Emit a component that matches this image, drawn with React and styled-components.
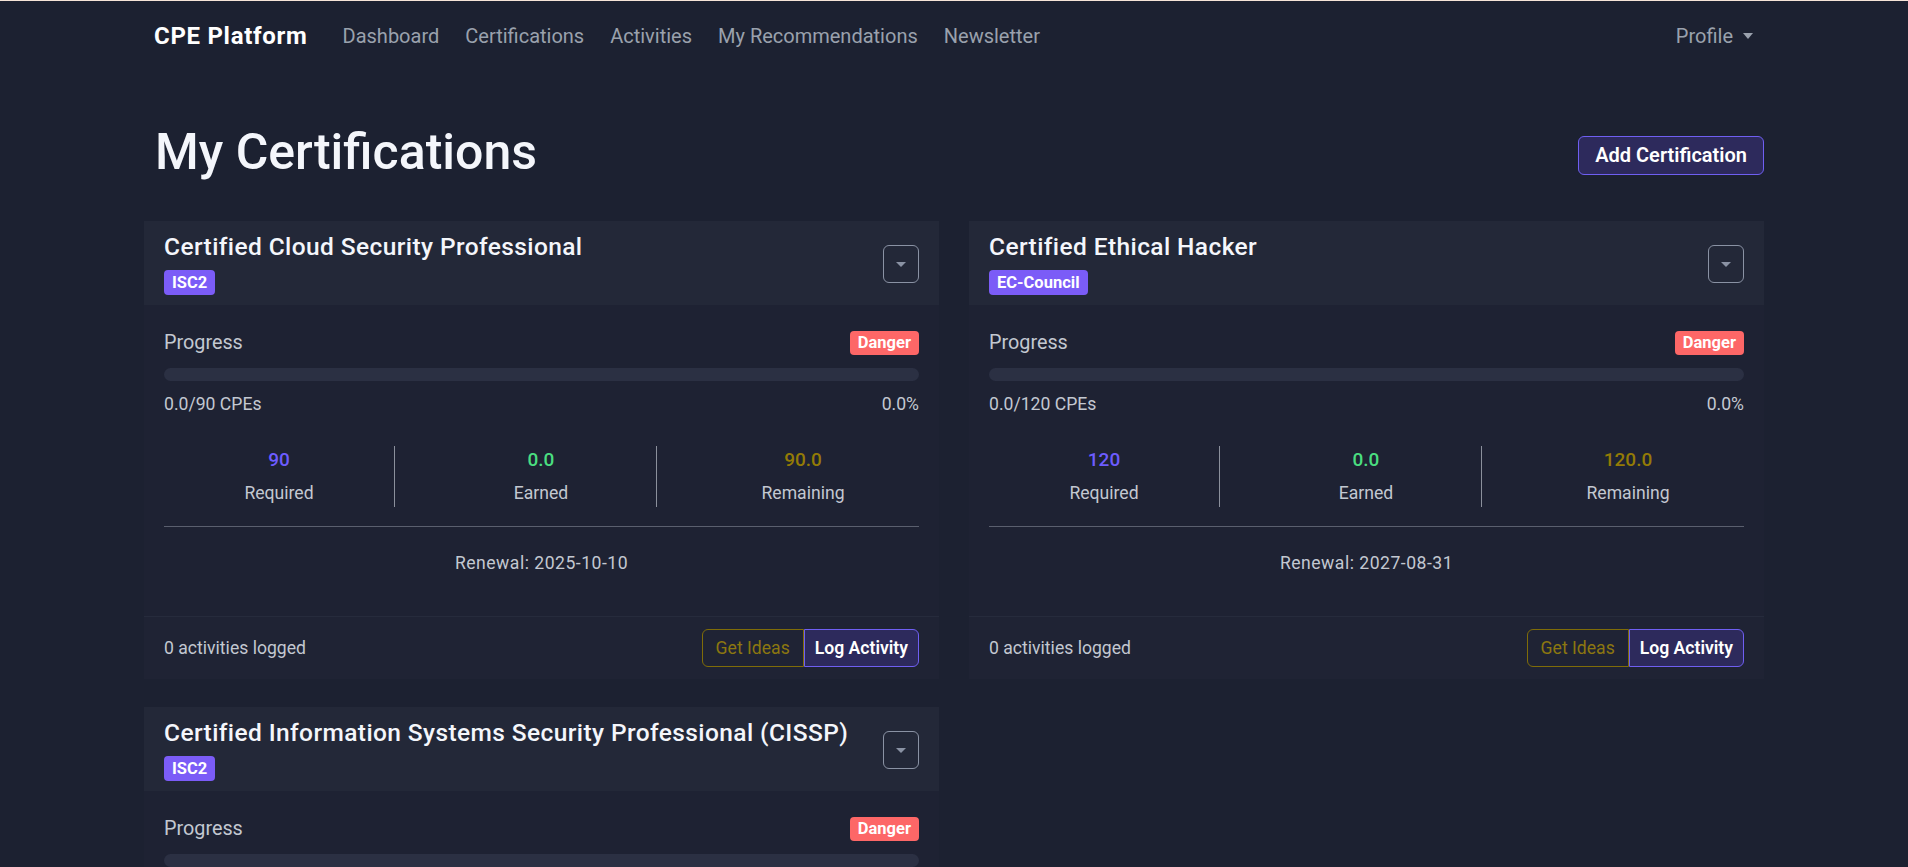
import React from 'react';
import styled, { createGlobalStyle } from 'styled-components';

const GlobalStyle = createGlobalStyle`
  * { box-sizing: border-box; }
  html, body { margin: 0; padding: 0; background: #1c2131; }
  body {
    font-family: Roboto, "Liberation Sans", sans-serif;
    color: #c3c8d1;
    border-top: 1px solid #f6e4d8;
  }
`;

const NavBar = styled.nav`
  height: 70px;
`;

const NavInner = styled.div`
  width: 1620px;
  height: 100%;
  margin: 0 auto;
  padding: 0 11px 0 10px;
  display: flex;
  align-items: center;
`;

const Brand = styled.a`
  font-size: 24px;
  font-weight: 700;
  letter-spacing: 0.7px;
  color: #ffffff;
  text-decoration: none;
  margin-right: 22px;
`;

const NavLink = styled.a`
  font-size: 20px;
  color: #9aa1ad;
  padding: 0 13px;
  text-decoration: none;
`;

const Profile = styled.a`
  margin-left: auto;
  display: flex;
  align-items: center;
  gap: 10px;
  font-size: 20px;
  color: #9aa1ad;
  text-decoration: none;
`;

const Caret = styled.span`
  width: 0;
  height: 0;
  border-left: ${p => p.$w / 2}px solid transparent;
  border-right: ${p => p.$w / 2}px solid transparent;
  border-top: ${p => p.$h}px solid ${p => p.$color};
`;

const Main = styled.main`
  width: 1620px;
  margin: 0 auto;
`;

const HeadRow = styled.div`
  display: flex;
  align-items: center;
  justify-content: space-between;
  padding: 51px 0 39px 11px;
`;

const PageTitle = styled.h1`
  margin: 0;
  font-size: 50px;
  font-weight: 500;
  line-height: 60px;
  color: #f4f6fb;
`;

const AddButton = styled.button`
  height: 39px;
  padding: 0 16px;
  font-family: inherit;
  font-size: 20px;
  font-weight: 600;
  color: #ffffff;
  background: #2d2a5c;
  border: 1px solid #6f5ff2;
  border-radius: 6px;
  margin-top: 6px;
`;

const CardGrid = styled.div`
  display: grid;
  grid-template-columns: 1fr 1fr;
  column-gap: 30px;
  row-gap: 28px;
  align-items: start;
`;

const Card = styled.section`
  background: #1e2233;
`;

const CardHeader = styled.div`
  height: 84px;
  display: flex;
  align-items: center;
  justify-content: space-between;
  padding: 2px 20px 0;
  background: #232838;
`;

const CardTitle = styled.h2`
  margin: 0 0 9px;
  font-size: 24.5px;
  font-weight: 500;
  letter-spacing: 0.4px;
  line-height: 28px;
  color: #f4f6fb;
`;

const Badge = styled.span`
  display: inline-block;
  height: ${p => p.$h || 25}px;
  line-height: ${p => p.$h || 25}px;
  padding: 0 8px;
  border-radius: 4px;
  font-size: 16.5px;
  font-weight: 700;
  color: #ffffff;
  background: ${p => p.$bg};
`;

const Toggle = styled.button`
  width: 36px;
  height: 38px;
  display: flex;
  align-items: center;
  justify-content: center;
  background: transparent;
  border: 1px solid #8a92a4;
  border-radius: 6px;
  padding: 0;
`;

const CardBody = styled.div`
  padding: 26px 20px 24px;
`;

const Between = styled.div`
  display: flex;
  align-items: center;
  justify-content: space-between;
`;

const BodyText = styled.span`
  font-size: 17.6px;
  line-height: 26px;
  color: #c3c8d1;
`;

const SectionLabel = styled.span`
  font-size: 19.8px;
  line-height: 24px;
  color: #c3c8d1;
`;

const Track = styled.div`
  margin-top: 13px;
  height: 13px;
  border-radius: 7px;
  background: #2b3043;
  overflow: hidden;
`;

const Fill = styled.div`
  height: 100%;
  background: #6f5ff2;
`;

const CountRow = styled(Between)`
  margin-top: 10px;
`;

const StatGrid = styled.div`
  display: grid;
  grid-template-columns: repeat(3, 1fr);
  margin: 29px -15px 0 -16px;
`;

const Stat = styled.div`
  position: relative;
  text-align: center;
  padding: 1px 0;
  &:not(:last-child)::after {
    content: '';
    position: absolute;
    right: 15px;
    top: 0;
    bottom: 0;
    width: 1px;
    background: #8b909c;
  }
`;

const StatValue = styled.div`
  font-size: 19px;
  font-weight: 500;
  line-height: 26px;
  color: ${p => p.$color};
`;

const StatLabel = styled.div`
  margin-top: 7px;
  font-size: 17.6px;
  line-height: 26px;
  color: #c3c8d1;
`;

const Rule = styled.hr`
  margin: 19px 0 0;
  border: 0;
  border-top: 1px solid #5a5f6e;
`;

const Renewal = styled.div`
  margin: 23px 0 16px;
  text-align: center;
  font-size: 17.6px;
  letter-spacing: 0.5px;
  line-height: 26px;
  color: #c3c8d1;
`;

const CardFooter = styled(Between)`
  height: 63px;
  padding: 0 20px;
  background: #1f2334;
  border-top: 1px solid #262b3c;
`;

const BtnGroup = styled.div`
  display: flex;
`;

const GroupButton = styled.button`
  height: 38px;
  padding: 0 ${p => p.$px}px;
  font-family: inherit;
  font-size: 17.6px;
  font-weight: ${p => (p.$primary ? 600 : 400)};
  color: ${p => (p.$primary ? '#ffffff' : '#8c7710')};
  background: ${p => (p.$primary ? '#2d2a5c' : 'transparent')};
  border: 1px solid ${p => (p.$primary ? '#6f5ff2' : '#7f6c08')};
  border-radius: ${p => (p.$primary ? '0 6px 6px 0' : '6px 0 0 6px')};
`;

const certs = [
  {
    title: 'Certified Cloud Security Professional',
    org: 'ISC2',
    required: 90,
    renewal: '2025-10-10',
  },
  {
    title: 'Certified Ethical Hacker',
    org: 'EC-Council',
    required: 120,
    renewal: '2027-08-31',
  },
  {
    title: 'Certified Information Systems Security Professional (CISSP)',
    org: 'ISC2',
    required: 120,
    renewal: '2026-05-31',
  },
];

function CertCard({ cert }) {
  const earned = 0;
  const pct = (earned / cert.required) * 100;
  return (
    <Card>
      <CardHeader>
        <div>
          <CardTitle>{cert.title}</CardTitle>
          <Badge $bg="#7b5cf7">{cert.org}</Badge>
        </div>
        <Toggle aria-label="Options">
          <Caret $w={10} $h={5} $color="#8a92a4" />
        </Toggle>
      </CardHeader>
      <CardBody>
        <Between>
          <SectionLabel>Progress</SectionLabel>
          <Badge $bg="#fd6767" $h={24}>Danger</Badge>
        </Between>
        <Track>
          <Fill style={{ width: `${pct}%` }} />
        </Track>
        <CountRow>
          <BodyText>{earned.toFixed(1)}/{cert.required} CPEs</BodyText>
          <BodyText>{pct.toFixed(1)}%</BodyText>
        </CountRow>
        <StatGrid>
          <Stat>
            <StatValue $color="#6d5cff">{cert.required}</StatValue>
            <StatLabel>Required</StatLabel>
          </Stat>
          <Stat>
            <StatValue $color="#4ade80">{earned.toFixed(1)}</StatValue>
            <StatLabel>Earned</StatLabel>
          </Stat>
          <Stat>
            <StatValue $color="#937b06">{(cert.required - earned).toFixed(1)}</StatValue>
            <StatLabel>Remaining</StatLabel>
          </Stat>
        </StatGrid>
        <Rule />
        <Renewal>Renewal: {cert.renewal}</Renewal>
      </CardBody>
      <CardFooter>
        <BodyText>0 activities logged</BodyText>
        <BtnGroup>
          <GroupButton $px={13}>Get Ideas</GroupButton>
          <GroupButton $primary $px={10}>Log Activity</GroupButton>
        </BtnGroup>
      </CardFooter>
    </Card>
  );
}

export default function App() {
  return (
    <>
      <GlobalStyle />
      <NavBar>
        <NavInner>
          <Brand href="#">CPE Platform</Brand>
          <NavLink href="#">Dashboard</NavLink>
          <NavLink href="#">Certifications</NavLink>
          <NavLink href="#">Activities</NavLink>
          <NavLink href="#">My Recommendations</NavLink>
          <NavLink href="#">Newsletter</NavLink>
          <Profile href="#">
            Profile
            <Caret $w={11} $h={6} $color="#9aa1ad" />
          </Profile>
        </NavInner>
      </NavBar>
      <Main>
        <HeadRow>
          <PageTitle>My Certifications</PageTitle>
          <AddButton>Add Certification</AddButton>
        </HeadRow>
        <CardGrid>
          {certs.map(c => (
            <CertCard key={c.title} cert={c} />
          ))}
        </CardGrid>
      </Main>
    </>
  );
}
